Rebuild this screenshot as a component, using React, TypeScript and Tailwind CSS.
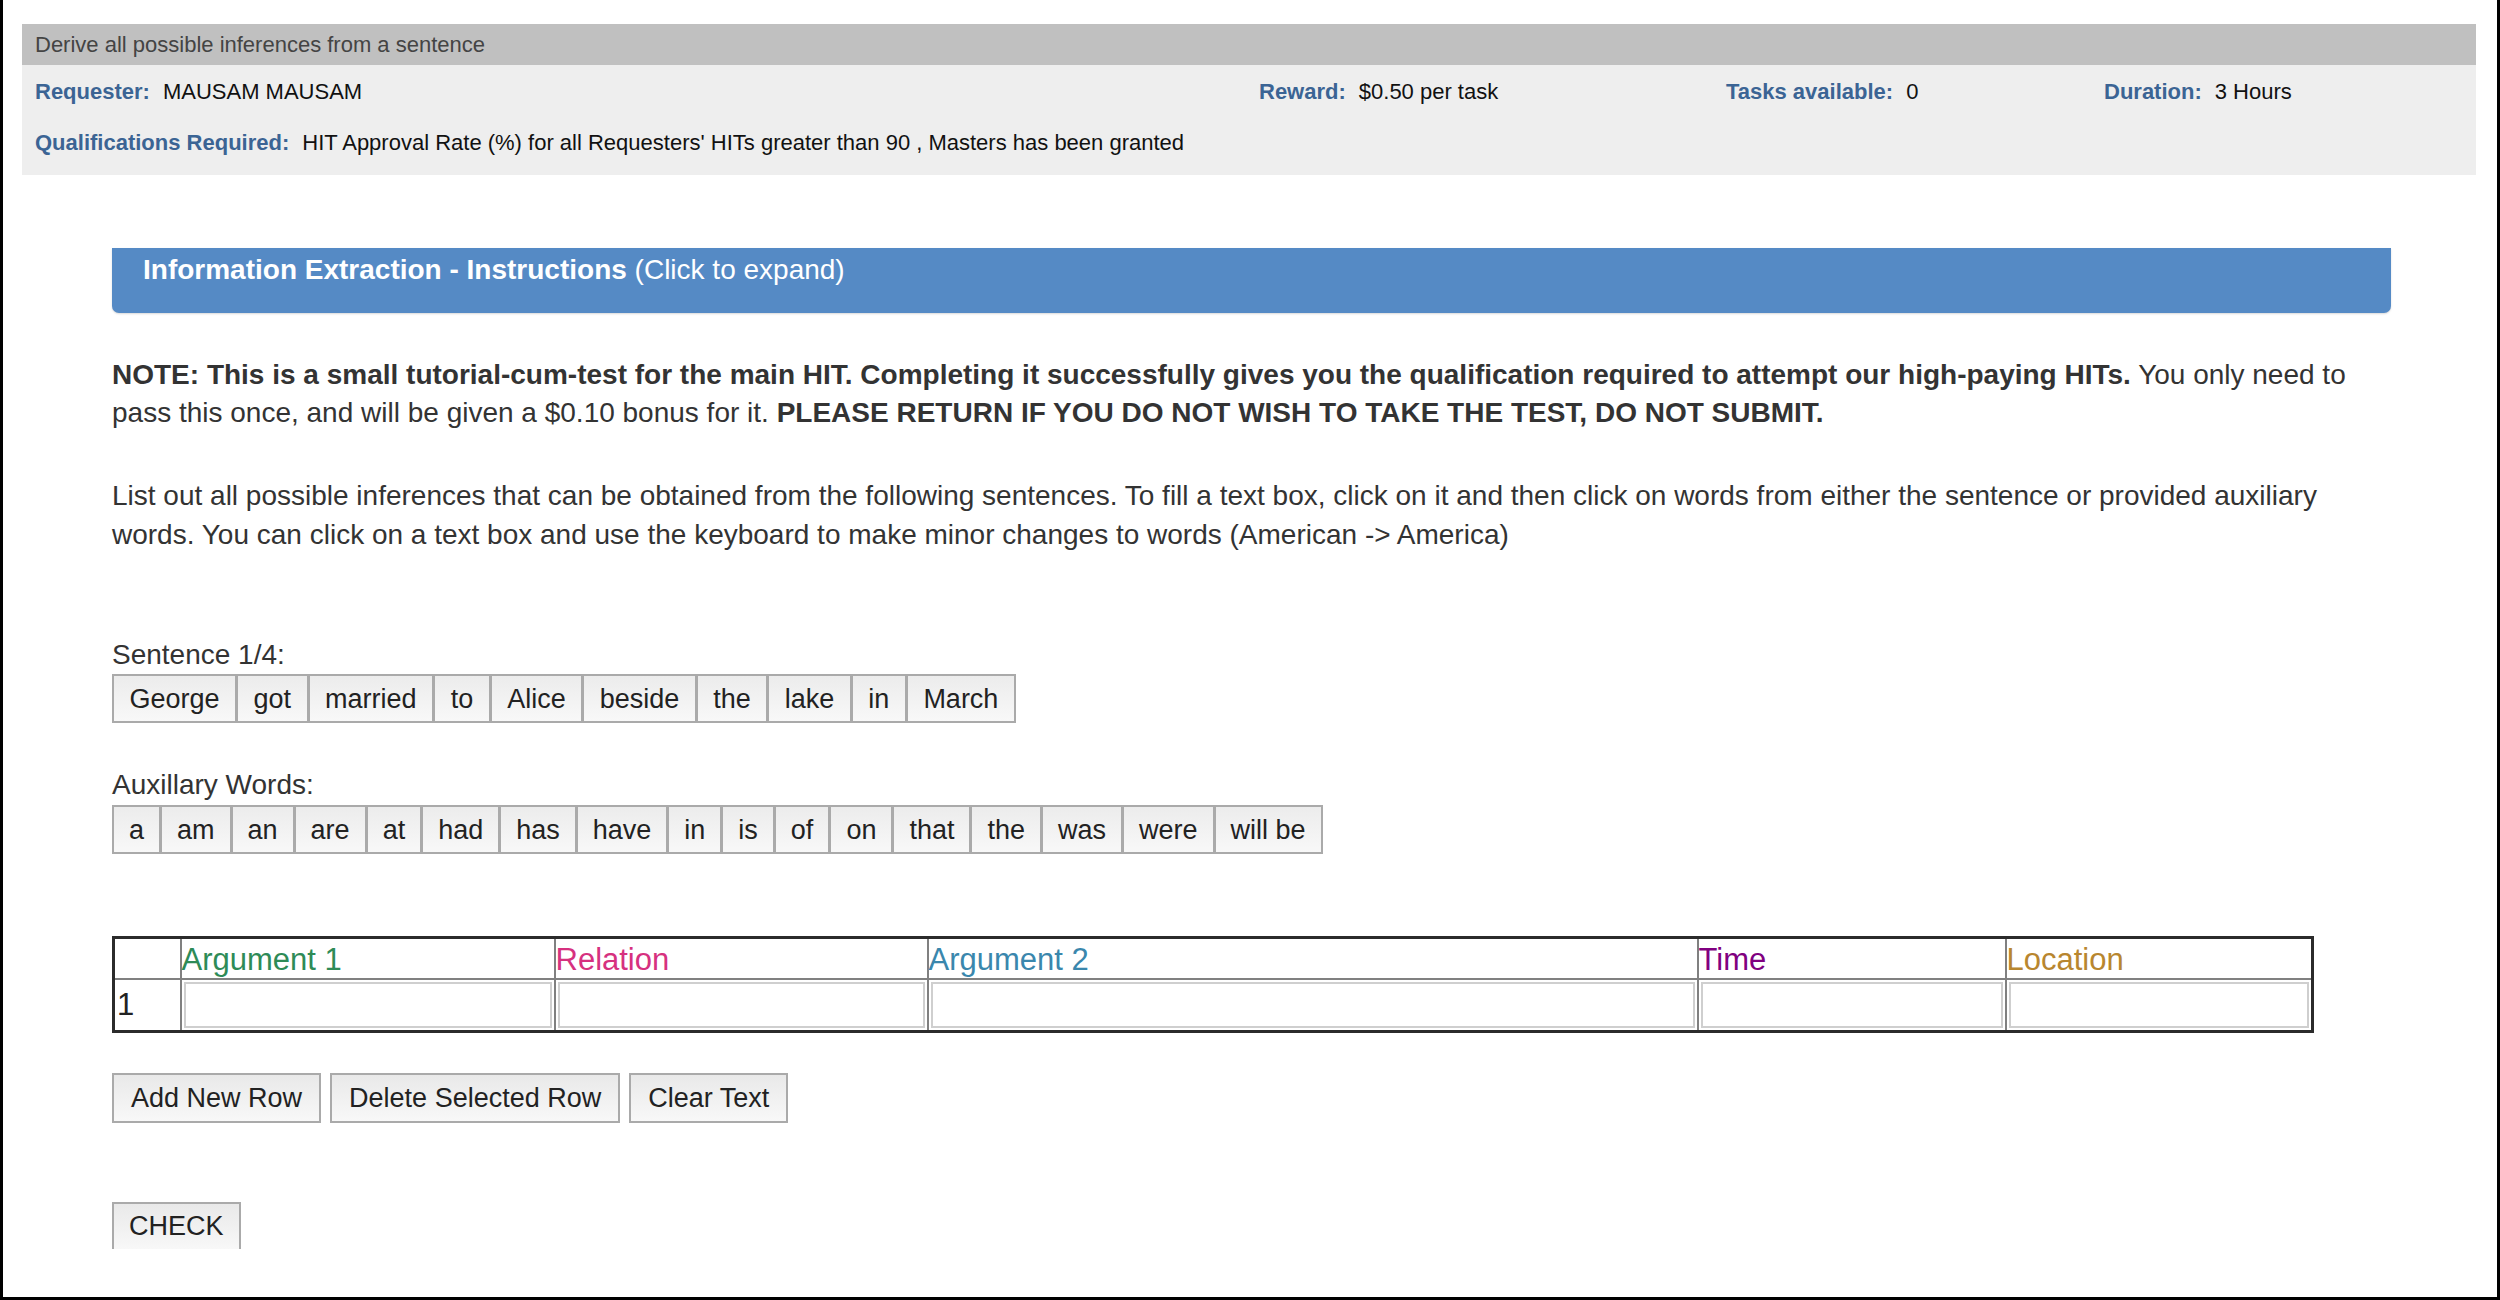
import React from "react";

const sentenceWords = ["George", "got", "married", "to", "Alice", "beside", "the", "lake", "in", "March"];
const auxWords = ["a", "am", "an", "are", "at", "had", "has", "have", "in", "is", "of", "on", "that", "the", "was", "were", "will be"];

const WordRow: React.FC<{ words: string[]; pad: string }> = ({ words, pad }) => (
  <div className="flex">
    {words.map((w, i) => (
      <span
        key={i}
        className={`flex h-[49px] items-center border-2 border-[#aaaaaa] bg-gradient-to-b from-[#ececec] to-[#f8f8f8] text-[27px] text-[#222] ${pad} ${i > 0 ? "-ml-[1px]" : ""}`}
      >
        {w}
      </span>
    ))}
  </div>
);

const Btn: React.FC<{ label: string; className?: string }> = ({ label, className = "" }) => (
  <button
    className={`flex h-[50px] items-center border-2 border-[#aaaaaa] bg-gradient-to-b from-[#e9e9e9] to-[#f8f8f8] px-[17px] text-[27px] text-[#222] ${className}`}
  >
    {label}
  </button>
);

const headers = [
  { label: "Argument 1", color: "text-[#2e8b57]" },
  { label: "Relation", color: "text-[#d6317f]" },
  { label: "Argument 2", color: "text-[#3a87ad]" },
  { label: "Time", color: "text-[#800080]" },
  { label: "Location", color: "text-[#b8862f]" },
];

export default function App() {
  return (
    <div className="h-[1300px] w-[2500px] border-x-[3px] border-b-[3px] border-black bg-white font-['Liberation_Sans',Arial,sans-serif]">
      {/* hit header */}
      <div className="ml-[19px] mr-[21px] pt-[24px]">
        <div className="flex h-[41px] items-center bg-[#c0c0c0] px-[13px] text-[22px] text-[#444]">
          Derive all possible inferences from a sentence
        </div>
        <div className="h-[110px] bg-[#eeeeee] px-[13px] pt-[14px] text-[22px] leading-[26px] text-[#111]">
          <div className="flex">
            <div className="w-[1224px]">
              <span className="font-bold text-[#3b6494]">Requester:</span>
              <span className="ml-[13px]">MAUSAM MAUSAM</span>
            </div>
            <div className="w-[467px]">
              <span className="font-bold text-[#3b6494]">Reward:</span>
              <span className="ml-[13px]">$0.50 per task</span>
            </div>
            <div className="w-[378px]">
              <span className="font-bold text-[#3b6494]">Tasks available:</span>
              <span className="ml-[13px]">0</span>
            </div>
            <div>
              <span className="font-bold text-[#3b6494]">Duration:</span>
              <span className="ml-[13px]">3 Hours</span>
            </div>
          </div>
          <div className="mt-[25px]">
            <span className="font-bold text-[#3b6494]">Qualifications Required:</span>
            <span className="ml-[13px]">
              HIT Approval Rate (%) for all Requesters' HITs greater than 90 , Masters has been granted
            </span>
          </div>
        </div>
      </div>

      {/* task body */}
      <div className="ml-[109px] w-[2279px] text-[28px] leading-[38px] text-[#333]">
        <div className="mt-[73px] h-[65px] rounded-b-[7px] bg-[#558ac5] px-[31px] pt-[3px] text-[28px] text-white shadow-[0_1px_2px_rgba(0,0,0,0.15)]">
          <span className="font-bold">Information Extraction - Instructions</span> (Click to expand)
        </div>

        <p className="mt-[43px]">
          <b>
            NOTE: This is a small tutorial-cum-test for the main HIT. Completing it successfully gives you the
            qualification required to attempt our high-paying HITs.
          </b>{" "}
          You only need to pass this once, and will be given a $0.10 bonus for it.{" "}
          <b>PLEASE RETURN IF YOU DO NOT WISH TO TAKE THE TEST, DO NOT SUBMIT.</b>
        </p>

        <p className="mt-[44px] leading-[39px]">
          List out all possible inferences that can be obtained from the following sentences. To fill a text box,
          click on it and then click on words from either the sentence or provided auxiliary words. You can click on
          a text box and use the keyboard to make minor changes to words (American -&gt; America)
        </p>

        <div className="mt-[82px]">Sentence 1/4:</div>
        <WordRow words={sentenceWords} pad="px-[15.5px]" />

        <div className="mt-[43px]">Auxillary Words:</div>
        <div className="mt-[1px]">
          <WordRow words={auxWords} pad="px-[15px]" />
        </div>

        <table className="mt-[82px] w-[2199px] table-fixed border-collapse border-[3px] border-[#2b2b2b]">
          <colgroup>
            <col className="w-[67px]" />
            <col className="w-[374px]" />
            <col className="w-[373px]" />
            <col className="w-[770px]" />
            <col className="w-[308px]" />
            <col className="w-[307px]" />
          </colgroup>
          <thead>
            <tr className="h-[41px]">
              <th className="border-2 border-[#808080] p-0"></th>
              {headers.map((h) => (
                <th
                  key={h.label}
                  className={`border-2 border-[#808080] p-0 text-left align-bottom text-[31px] font-normal leading-[36px] ${h.color}`}
                >
                  {h.label}
                </th>
              ))}
            </tr>
          </thead>
          <tbody>
            <tr className="h-[52px]">
              <td className="border-2 border-[#808080] p-0 pl-[2px] align-middle text-[31px] text-[#222]">1</td>
              {headers.map((h) => (
                <td key={h.label} className="border-2 border-[#808080] px-[2px] py-[2px]">
                  <input className="block h-[46px] w-full border-2 border-[#cfcfcf] bg-white outline-none" />
                </td>
              ))}
            </tr>
          </tbody>
        </table>

        <div className="mt-[40px] flex gap-[9px]">
          <Btn label="Add New Row" />
          <Btn label="Delete Selected Row" />
          <Btn label="Clear Text" />
        </div>

        <div className="mt-[79px] flex">
          <button className="flex h-[47px] items-center border-2 border-b-0 border-[#aaaaaa] bg-gradient-to-b from-[#e9e9e9] to-[#f8f8f8] px-[15px] text-[27px] text-[#222]">
            CHECK
          </button>
        </div>
      </div>
    </div>
  );
}
